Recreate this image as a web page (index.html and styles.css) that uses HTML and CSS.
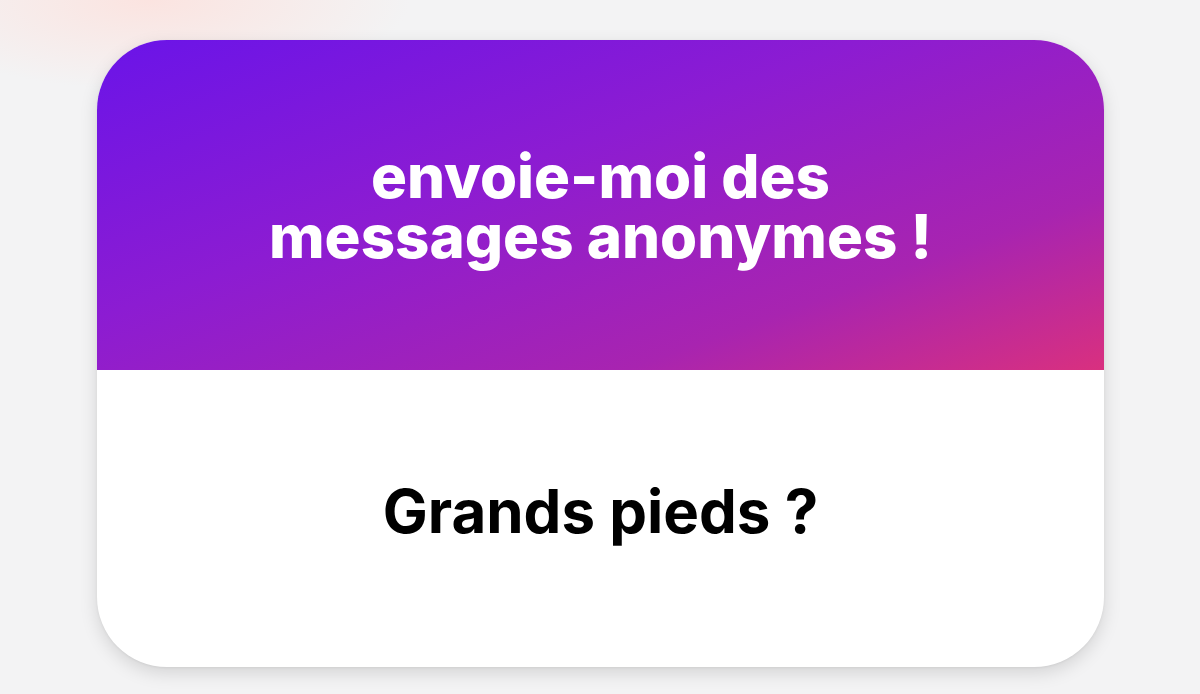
FILE: index.html
```html
<!DOCTYPE html>
<html lang="fr">
<head>
<meta charset="utf-8">
<title>envoie-moi des messages anonymes</title>
<link rel="stylesheet" href="styles.css">
</head>
<body>
<main class="page">
  <section class="card">
    <header class="card-head">
      <h1 class="prompt">envoie-moi des<br>messages anonymes !</h1>
    </header>
    <div class="card-body">
      <p class="question">Grands pieds ?</p>
    </div>
  </section>
</main>
</body>
</html>
```

FILE: styles.css
```css
html, body {
  margin: 0;
  padding: 0;
}
body {
  width: 1200px;
  height: 694px;
  overflow: hidden;
  background:
    radial-gradient(ellipse 260px 90px at 150px 0px, rgba(252, 226, 222, 0.9), rgba(252, 226, 222, 0) 100%),
    #f3f3f4;
  font-family: Inter, "Liberation Sans", Arial, sans-serif;
}
.page {
  padding: 40px 0 0 97px;
}
.card {
  width: 1007px;
  border-radius: 70px;
  overflow: hidden;
  background: #ffffff;
  box-shadow: 0 6px 18px rgba(0, 0, 0, 0.13), 0 1px 3px rgba(0, 0, 0, 0.06);
  display: flex;
  flex-direction: column;
}
.card-head {
  height: 330px;
  background: linear-gradient(160deg, #6a14e8 0%, #8c1cd2 40%, #a824b0 75%, #d9307f 100%);
  display: flex;
  align-items: center;
  justify-content: center;
}
.prompt {
  margin: 0;
  padding-top: 1px;
  color: #ffffff;
  font-weight: 800;
  font-size: 60px;
  line-height: 60px;
  letter-spacing: 0;
  text-align: center;
}
.card-body {
  height: 297px;
  display: flex;
  align-items: center;
  justify-content: center;
}
.question {
  margin: 0;
  color: #000000;
  font-weight: 700;
  font-size: 60px;
  line-height: 60px;
  padding-bottom: 16px;
}
```
